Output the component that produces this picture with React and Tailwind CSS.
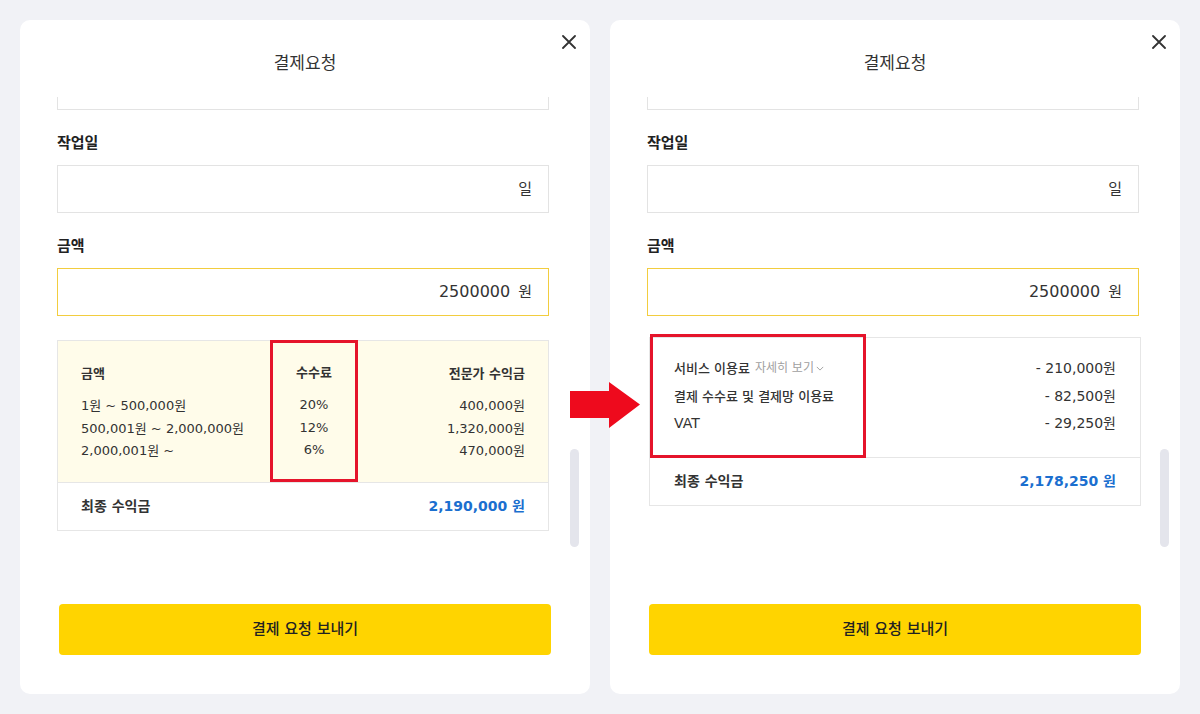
const font = { fontFamily: '"DejaVu Sans", "Noto Sans CJK KR", sans-serif' }

const CloseIcon = () => (
  <svg viewBox="0 0 14 14" className="w-[14px] h-[14px]" fill="none" stroke="#333" strokeWidth="1.8" strokeLinecap="round">
    <path d="M1 1l12 12M13 1L1 13" />
  </svg>
)

const Field = ({ label, value, unit, active }) => (
  <div>
    <div className="text-[15px] leading-[22px] font-bold text-[#222] mt-[22px]">{label}</div>
    <div
      className={`mt-[11px] h-[48px] border flex items-center justify-end pr-[16px] gap-[8px] text-[#333] ${active ? 'border-[#f2cd3f]' : 'border-[#e3e3e3]'}`}
    >
      {value && <span className="text-[16px]">{value}</span>}
      <span className="text-[15px]">{unit}</span>
    </div>
  </div>
)

const Card = ({ children }) => (
  <div className="relative flex flex-col w-[570px] h-[674px] bg-white rounded-[10px] shrink-0">
    <button className="absolute top-[15px] right-[14px]">
      <CloseIcon />
    </button>
    <div className="h-[77px] pt-[31px] text-center text-[17px] leading-6 text-[#333]">결제요청</div>
    <div className="relative flex-1 overflow-hidden pl-[37px] pr-[41px]">
      <div className="-mt-[36px] h-[49px] border border-[#e3e3e3]" />
      <Field label="작업일" unit="일" />
      <Field label="금액" value="2500000" unit="원" active />
      {children}
      <div className="absolute right-[11px] top-[352px] w-[9px] h-[98px] rounded-full bg-[#e4e5ec]" />
    </div>
    <div className="px-[39px] pb-[39px]">
      <button className="w-full h-[51px] rounded-[4px] bg-[#ffd400] text-[15px] font-medium text-[#222]">
        결제 요청 보내기
      </button>
    </div>
  </div>
)

const tiers = [
  ['1원 ~ 500,000원', '20%', '400,000원'],
  ['500,001원 ~ 2,000,000원', '12%', '1,320,000원'],
  ['2,000,001원 ~', '6%', '470,000원'],
]

const TierTable = () => (
  <div className="mt-[24px] border border-[#e6e6e6] text-[#333]">
    <div className="grid grid-cols-[212px_88px_1fr] bg-[#fffcea] h-[141px]">
      <div className="pl-[23px] pt-[24px]">
        <div className="text-[13px] leading-[18px] font-bold">금액</div>
        <div className="mt-[12px] text-[13px] leading-[22.5px]">
          {tiers.map(t => <div key={t[0]}>{t[0]}</div>)}
        </div>
      </div>
      <div className="border-[3px] border-[#e5142b] -mt-px pt-[21px] text-center">
        <div className="text-[13px] leading-[18px] font-bold">수수료</div>
        <div className="mt-[12px] text-[13px] leading-[22.5px]">
          {tiers.map(t => <div key={t[1]}>{t[1]}</div>)}
        </div>
      </div>
      <div className="pr-[23px] pt-[24px] text-right">
        <div className="text-[13px] leading-[18px] font-bold">전문가 수익금</div>
        <div className="mt-[12px] text-[13px] leading-[22.5px]">
          {tiers.map(t => <div key={t[2]}>{t[2]}</div>)}
        </div>
      </div>
    </div>
    <div className="border-t border-[#e6e6e6] h-[48px] flex items-center justify-between px-[23px]">
      <span className="text-[14px] font-bold">최종 수익금</span>
      <span className="text-[14px] font-bold text-[#1b6fcf]">2,190,000 원</span>
    </div>
  </div>
)

const FeeTable = () => (
  <div className="mt-[21px] ml-[2px] -mr-[2px] border border-[#e6e6e6] text-[#333]">
    <div className="flex justify-between items-start h-[119px]">
      <div className="w-[216px] h-[124px] -mt-[4px] border-[3px] border-[#e5142b] pl-[21px] pt-[18px] text-[13px] leading-[27.5px] font-medium">
        <div className="flex items-center gap-[5px]">
          서비스 이용료
          <span className="flex items-center gap-[2px] text-[12px] font-normal text-[#a0a0a0]">
            자세히 보기
            <svg viewBox="0 0 10 6" className="w-[8px] h-[5px]" fill="none" stroke="#a0a0a0" strokeWidth="1.2">
              <path d="M1 1l4 4 4-4" />
            </svg>
          </span>
        </div>
        <div>결제 수수료 및 결제망 이용료</div>
        <div className="text-[14px]">VAT</div>
      </div>
      <div className="pr-[24px] pt-[17px] text-right text-[14px] leading-[27.5px]">
        <div>- 210,000원</div>
        <div>- 82,500원</div>
        <div>- 29,250원</div>
      </div>
    </div>
    <div className="border-t border-[#e6e6e6] h-[48px] flex items-center justify-between px-[24px]">
      <span className="text-[14px] font-bold">최종 수익금</span>
      <span className="text-[14px] font-bold text-[#1b6fcf]">2,178,250 원</span>
    </div>
  </div>
)

export default function App() {
  return (
    <div className="relative w-[1200px] h-[714px] bg-[#f1f2f6] p-5 flex gap-5" style={font}>
      <Card>
        <TierTable />
      </Card>
      <Card>
        <FeeTable />
      </Card>
      <svg viewBox="0 0 71 48" className="absolute left-[570px] top-[381px] w-[71px] h-[48px]">
        <polygon points="0,10 39,10 39,1 70,23.5 39,47 39,37 0,37" fill="#ee0a1d" />
      </svg>
    </div>
  )
}
